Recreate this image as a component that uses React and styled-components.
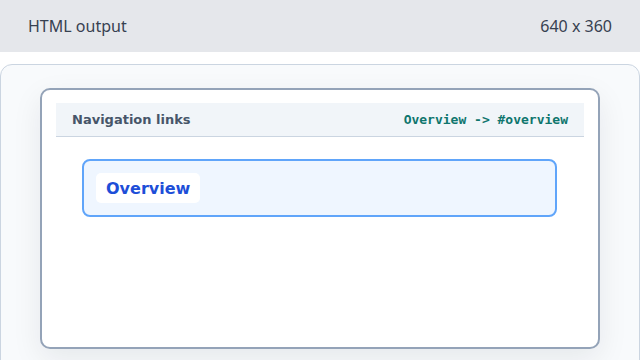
import React from 'react';
import styled, { createGlobalStyle } from 'styled-components';

const GlobalStyle = createGlobalStyle`
  html, body {
    margin: 0;
    padding: 0;
    background: #ffffff;
  }
  body {
    width: 640px;
    height: 360px;
    overflow: hidden;
    font-family: 'DejaVu Sans', sans-serif;
  }
`;

const App = () => {
  return (
    <>
      <GlobalStyle />
      <TopBar>
        <BarLabel>HTML output</BarLabel>
        <BarLabel>640 x 360</BarLabel>
      </TopBar>
      <Stage>
        <Panel>
          <Card>
            <CardHeader>
              <HeaderTitle>Navigation links</HeaderTitle>
              <HeaderCode>Overview -&gt; #overview</HeaderCode>
            </CardHeader>
            <LinkBox>
              <NavLink href="#overview">Overview</NavLink>
            </LinkBox>
          </Card>
        </Panel>
      </Stage>
    </>
  );
};

const TopBar = styled.div`
  display: flex;
  justify-content: space-between;
  align-items: center;
  height: 52px;
  padding: 0 28px;
  background-color: #e5e7eb;
`;

const BarLabel = styled.span`
  font-family: 'Noto Sans', 'Open Sans', sans-serif;
  font-size: 16px;
  color: #374151;
`;

const Stage = styled.div`
  height: 308px;
  padding-top: 12px;
  box-sizing: border-box;
  overflow: hidden;
`;

const Panel = styled.div`
  height: 320px;
  padding: 23px 39px;
  border: 1px solid #cbd5e1;
  border-radius: 12px;
  background-color: #f8fafc;
`;

const Card = styled.div`
  width: 560px;
  height: 261px;
  box-sizing: border-box;
  padding: 13px 14px;
  border: 2px solid #94a3b8;
  border-radius: 10px;
  background-color: #ffffff;
  box-shadow: 0 10px 30px rgba(15, 23, 42, 0.08);
`;

const CardHeader = styled.div`
  display: flex;
  justify-content: space-between;
  align-items: center;
  height: 33px;
  padding: 0 16px;
  border-bottom: 1px solid #cbd5e1;
  background-color: #f1f5f9;
`;

const HeaderTitle = styled.span`
  font-size: 13px;
  font-weight: bold;
  color: #475569;
`;

const HeaderCode = styled.code`
  font-family: 'DejaVu Sans Mono', monospace;
  font-size: 13px;
  font-weight: bold;
  color: #0f766e;
`;

const LinkBox = styled.div`
  display: flex;
  align-items: center;
  height: 58px;
  box-sizing: border-box;
  margin: 22px 27px 0 26px;
  padding: 0 12px;
  border: 2px solid #60a5fa;
  border-radius: 8px;
  background-color: #eff6ff;
`;

const NavLink = styled.a`
  display: inline-flex;
  align-items: center;
  height: 30px;
  padding: 0 10px;
  border-radius: 5px;
  background-color: #ffffff;
  font-size: 16px;
  font-weight: bold;
  color: #1d4ed8;
  text-decoration: none;
`;

export default App;
